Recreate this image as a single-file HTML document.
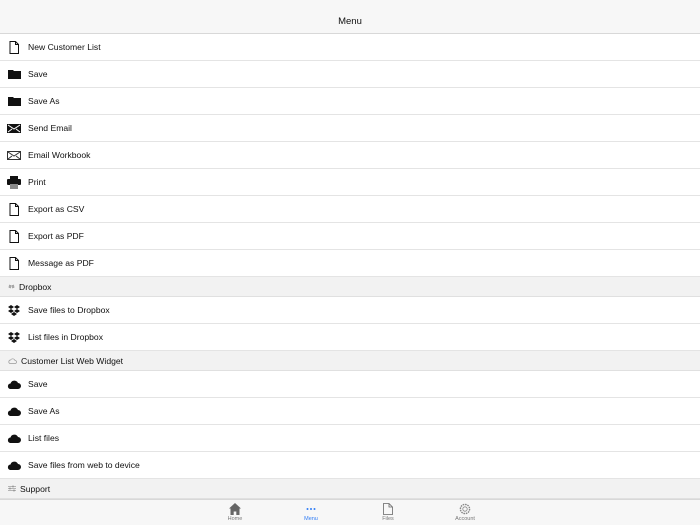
<!DOCTYPE html><html><head><style>
*{margin:0;padding:0;box-sizing:border-box}
body{width:700px;height:525px;overflow:hidden;background:#fff;font-family:"Liberation Sans",Arial,sans-serif;color:#111;position:relative}
.hdr{height:34px;background:#f7f7f7;border-bottom:1px solid #d8d8d8;text-align:center;padding-top:16px;font-size:9.5px;line-height:11px}
.row{height:27px;border-bottom:1px solid #e4e4e4;display:flex;align-items:center;font-size:8.6px}
.row .ic{width:28px;display:flex;justify-content:center;align-items:center}
.sec{height:20px;background:#f2f2f2;border-bottom:1px solid #e0e0e0;display:flex;align-items:center;font-size:8.6px;padding-left:8px}
.sec svg{margin-right:4px}
.tab{position:absolute;left:0;top:499px;width:700px;height:26px;background:#f7f7f7;border-top:1px solid #d8d8d8}
.t{position:absolute;top:3px;width:60px;text-align:center;font-size:5.5px;color:#777;line-height:7px}
.t svg{display:block;margin:0 auto 1px}
</style></head><body>
<div class="hdr">Menu</div>
<div class="row"><div class="ic"><svg width="10" height="13"><path d="M1 .5h5.5l3 3v9h-8.5z" fill="none" stroke="#111"/><path d="M6.5.5v3h3" fill="none" stroke="#111"/></svg></div>New Customer List</div>
<div class="row"><div class="ic"><svg width="13" height="10"><path d="M0 1h5l1 1h7v8h-13z" fill="#111"/></svg></div>Save</div>
<div class="row"><div class="ic"><svg width="13" height="10"><path d="M0 1h5l1 1h7v8h-13z" fill="#111"/></svg></div>Save As</div>
<div class="row"><div class="ic"><svg width="14" height="9"><rect width="14" height="9" fill="#111"/><path d="M1 1l6 4 6-4M1 8l4-3M13 8l-4-3" stroke="#fff" fill="none"/></svg></div>Send Email</div>
<div class="row"><div class="ic"><svg width="14" height="9"><rect x=".5" y=".5" width="13" height="8" fill="none" stroke="#333"/><path d="M1 1l6 4 6-4M1 8l4-3M13 8l-4-3" stroke="#333" fill="none"/></svg></div>Email Workbook</div>
<div class="row"><div class="ic"><svg width="14" height="13"><rect x="3" y="0" width="8" height="3" fill="#111"/><rect x="0" y="3" width="14" height="6" rx="1" fill="#111"/><rect x="3" y="8" width="8" height="5" fill="#888"/></svg></div>Print</div>
<div class="row"><div class="ic"><svg width="10" height="13"><path d="M1 .5h5.5l3 3v9h-8.5z" fill="none" stroke="#111"/><path d="M6.5.5v3h3" fill="none" stroke="#111"/></svg></div>Export as CSV</div>
<div class="row"><div class="ic"><svg width="10" height="13"><path d="M1 .5h5.5l3 3v9h-8.5z" fill="none" stroke="#111"/><path d="M6.5.5v3h3" fill="none" stroke="#111"/></svg></div>Export as PDF</div>
<div class="row"><div class="ic"><svg width="10" height="13"><path d="M1 .5h5.5l3 3v9h-8.5z" fill="none" stroke="#111"/><path d="M6.5.5v3h3" fill="none" stroke="#111"/></svg></div>Message as PDF</div>
<div class="sec"><svg width="7" height="6"><path d="M1 1l2 1-2 1 2 1M6 1l-2 1 2 1-2 1" stroke="#888" fill="none" stroke-width=".8"/></svg>Dropbox</div>
<div class="row"><div class="ic"><svg width="12" height="11"><path d="M3 0l3 2-3 2-3-2zM9 0l3 2-3 2-3-2zM3 4l3 2-3 2-3-2zM9 4l3 2-3 2-3-2zM6 7l3 2-3 2-3-2z" fill="#111"/></svg></div>Save files to Dropbox</div>
<div class="row"><div class="ic"><svg width="12" height="11"><path d="M3 0l3 2-3 2-3-2zM9 0l3 2-3 2-3-2zM3 4l3 2-3 2-3-2zM9 4l3 2-3 2-3-2zM6 7l3 2-3 2-3-2z" fill="#111"/></svg></div>List files in Dropbox</div>
<div class="sec"><svg width="9" height="6"><path d="M2 5.5h5a1.5 1.5 0 0 0 0-3 2.5 2.5 0 0 0-4.5-.5 1.8 1.8 0 0 0-.5 3.5z" fill="none" stroke="#999" stroke-width=".7"/></svg>Customer List Web Widget</div>
<div class="row"><div class="ic"><svg width="14" height="9"><path d="M3 9h8a3 3 0 0 0 0-6 4 4 0 0 0-7.5 0.5A2.8 2.8 0 0 0 3 9z" fill="#111"/></svg></div>Save</div>
<div class="row"><div class="ic"><svg width="14" height="9"><path d="M3 9h8a3 3 0 0 0 0-6 4 4 0 0 0-7.5 0.5A2.8 2.8 0 0 0 3 9z" fill="#111"/></svg></div>Save As</div>
<div class="row"><div class="ic"><svg width="14" height="9"><path d="M3 9h8a3 3 0 0 0 0-6 4 4 0 0 0-7.5 0.5A2.8 2.8 0 0 0 3 9z" fill="#111"/></svg></div>List files</div>
<div class="row"><div class="ic"><svg width="14" height="9"><path d="M3 9h8a3 3 0 0 0 0-6 4 4 0 0 0-7.5 0.5A2.8 2.8 0 0 0 3 9z" fill="#111"/></svg></div>Save files from web to device</div>
<div class="sec"><svg width="8" height="7"><path d="M0 1.5h8M0 3.5h8M0 5.5h8" stroke="#777" stroke-width=".6"/><path d="M5 .5v2M2 2.5v2M6 4.5v2" stroke="#777" stroke-width=".8"/></svg>Support</div>
<div class="tab">
<div class="t" style="left:205px"><svg width="12" height="12"><path d="M6 0l6 5.5h-1.5v6.5h-3.2v-3.5h-2.6v3.5h-3.2v-6.5h-1.5z" fill="#666"/></svg>Home</div>
<div class="t" style="left:281px;color:#2f7cf6"><svg width="12" height="12"><circle cx="2.5" cy="6" r="1" fill="#2f7cf6"/><circle cx="6" cy="6" r="1" fill="#2f7cf6"/><circle cx="9.5" cy="6" r="1" fill="#2f7cf6"/></svg>Menu</div>
<div class="t" style="left:358px"><svg width="10" height="12"><path d="M.5.5h5.5l3.5 3.5v7.5h-9z" fill="none" stroke="#666" stroke-width=".8"/><path d="M6 .5v3.5h3.5" fill="none" stroke="#666" stroke-width=".8"/></svg>Files</div>
<div class="t" style="left:435px"><svg width="12" height="12"><circle cx="6" cy="6" r="4.6" fill="none" stroke="#888" stroke-width="1.4" stroke-dasharray="1.6 .8"/><circle cx="6" cy="6" r="2.2" fill="none" stroke="#888" stroke-width=".8"/></svg>Account</div>
</div>
</body></html>
